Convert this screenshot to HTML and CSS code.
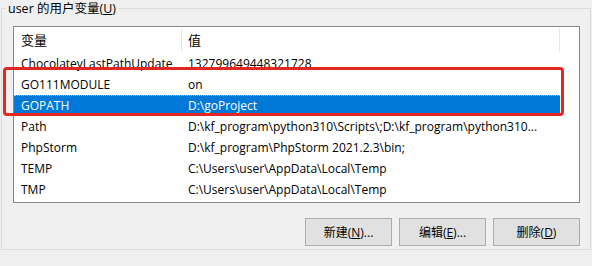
FILE: index.html
```html
<!DOCTYPE html>
<html lang="zh-CN">
<head>
    <meta charset="UTF-8">
    <title>用户变量</title>
    <link rel="stylesheet" href="styles.css">
</head>
<body>
    <fieldset class="group">
        <legend class="group-title">user 的用户变量(<u>U</u>)</legend>
        <div class="group-body">
            <div class="list">
                <div class="list-head">
                    <div class="cell">变量</div>
                    <div class="cell">值</div>
                </div>
                <div class="row"><div class="cell">ChocolateyLastPathUpdate</div><div class="cell">132799649448321728</div></div>
                <div class="row"><div class="cell">GO111MODULE</div><div class="cell">on</div></div>
                <div class="row selected"><div class="cell">GOPATH</div><div class="cell">D:\goProject</div></div>
                <div class="row"><div class="cell">Path</div><div class="cell">D:\kf_program\python310\Scripts\;D:\kf_program\python310...</div></div>
                <div class="row"><div class="cell">PhpStorm</div><div class="cell">D:\kf_program\PhpStorm 2021.2.3\bin;</div></div>
                <div class="row"><div class="cell">TEMP</div><div class="cell">C:\Users\user\AppData\Local\Temp</div></div>
                <div class="row"><div class="cell">TMP</div><div class="cell">C:\Users\user\AppData\Local\Temp</div></div>
            </div>
            <div class="buttons">
                <button class="btn">新建(<u>N</u>)...</button>
                <button class="btn">编辑(<u>E</u>)...</button>
                <button class="btn">删除(<u>D</u>)</button>
            </div>
        </div>
    </fieldset>

    <!-- red mark drawn over the two go rows -->
    <div class="mark"></div>
</body>
</html>
```

FILE: styles.css
```css
body{margin: 0; padding: 0; background-color: #f0f0f0; font-family: "Open Sans", "Noto Sans CJK SC", sans-serif; font-size: 12px; color: #000; position: relative; height: 266px; overflow: hidden;}

.group{
    margin: 0 0 0 1px;
    padding: 0;
    width: 588px;
    height: 248px;
    border: 1px solid #dcdcdc;
}
.group-title{
    margin-left: 4px;
    padding: 0 2px;
    font-size: 12.5px;
    line-height: 17px;
}
.group-body{
    padding: 9px 10px 0 11px;
}

.list{
    width: 565px;
    height: 175px;
    border: 1px solid #828790;
    background-color: white;
}
.list-head, .row{
    display: grid;
    grid-template-columns: 168px 378px;
    width: 546px;
}
.list-head{height: 26px; align-items: center; font-size: 13px;}
.list-head .cell{border-right: 1px solid #e5e5e5; height: 24px; line-height: 24px;}
.row{height: 21px; line-height: 21px;}
.cell{padding-left: 7px; white-space: nowrap; overflow: hidden;}
.cell + .cell{padding-left: 6px;}
.row.selected{background-color: #0078d7; color: white; border-top: 1px dotted #9ccaf0; height: 20px; line-height: 19px;}

.buttons{
    display: flex;
    justify-content: flex-end;
    gap: 7px;
    margin-top: 15px;
    width: 567px;
}
.btn{
    width: 87px;
    height: 28px;
    background-color: #e1e1e1;
    border: 1px solid #adadad;
    font-family: "Open Sans", "Noto Sans CJK SC", sans-serif;
    font-size: 12px;
    padding: 0;
}

.mark{
    position: absolute;
    left: 3px;
    top: 67px;
    width: 555px;
    height: 43px;
    border: 3px solid #e3261f;
    border-radius: 4px;
}
```
